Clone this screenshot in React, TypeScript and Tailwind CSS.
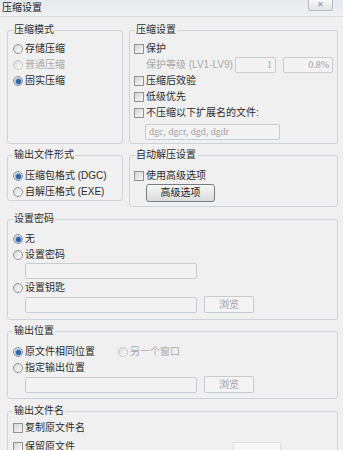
import React from 'react';

const font = { fontFamily: '"Liberation Sans", "Noto Sans CJK SC", sans-serif' };

function Radio({ label, checked = false, disabled = false }: { label: string; checked?: boolean; disabled?: boolean }) {
  return (
    <div className="flex items-center h-[16px] gap-[2px]">
      <span
        className={`w-[10px] h-[10px] rounded-full border flex items-center justify-center bg-gradient-to-br from-[#d8d8d8] to-[#ffffff] ${
          disabled ? 'border-[#c6c8ca]' : 'border-[#8e9195]'
        }`}
      >
        {checked && <span className="w-[5px] h-[5px] rounded-full bg-[#2f63a3] shadow-[0_0_1px_1px_#8fb3dc]" />}
      </span>
      <span className={disabled ? 'text-[#a9a9a9]' : 'text-[#2b2b2b]'}>{label}</span>
    </div>
  );
}

function Check({ label }: { label: string }) {
  return (
    <div className="flex items-center h-[16px] gap-[2px]">
      <span className="w-[10px] h-[10px] border border-[#8e9195] bg-gradient-to-br from-[#d6d6d6] to-[#f7f7f7]" />
      <span className="text-[#2b2b2b]">{label}</span>
    </div>
  );
}

function TextBox({ className = '', value = '', right = false }: { className?: string; value?: string; right?: boolean }) {
  return (
    <div
      className={`h-[16px] border border-[#c9cdd1] rounded-[2px] bg-[#f3f3f3] text-[#a0a0a0] flex items-center px-[3px] ${
        right ? 'justify-end' : ''
      } ${className}`}
      style={{ fontFamily: '"Liberation Serif", "Noto Sans CJK SC", serif' }}
    >
      {value}
    </div>
  );
}

function BrowseButton() {
  return (
    <div className="w-[50px] h-[17px] border border-[#c8cacc] rounded-[2px] bg-[#f4f4f4] text-[#a3a3a3] flex items-center justify-center">
      浏览
    </div>
  );
}

function Group({ title, className = '', children, contentClass = '' }: { title: string; className?: string; children: React.ReactNode; contentClass?: string }) {
  return (
    <fieldset className={`border border-[#cdd3d8] rounded-[3px] m-0 p-0 ${className}`}>
      <legend className="ml-[5px] px-[1px] leading-[12px] text-[#2b2b2b]">{title}</legend>
      <div className={`flex flex-col ${contentClass}`}>{children}</div>
    </fieldset>
  );
}

export default function App() {
  return (
    <div className="w-[343px] h-[450px] overflow-hidden bg-[#f0f0f0] text-[10px] leading-[12px]" style={font}>
      <div className="h-[17px] flex items-start justify-between bg-gradient-to-b from-[#e6e9ed] to-[#eef0f2] border-b border-[#d8dce0]">
        <span className="pl-[2px] pt-[2px] text-[#222]">压缩设置</span>
        <div className="mr-[10px] w-[25px] h-[11px] rounded-b-[3px] border border-t-0 border-[#b3b9c0] bg-gradient-to-b from-[#f7f8f9] to-[#e2e5e9] flex items-center justify-center text-[8px] text-[#8a9096] leading-none">
          ✕
        </div>
      </div>

      <div className="pl-[7px] pr-[5px] pt-[7px] flex flex-col">
        <div className="flex gap-[6px]">
          <Group title="压缩模式" className="w-[116px] h-[120px]" contentClass="mt-[5px] pl-[5px]">
            <Radio label="存储压缩" />
            <Radio label="普通压缩" disabled />
            <Radio label="固实压缩" checked />
          </Group>
          <Group title="压缩设置" className="w-[209px] h-[120px]" contentClass="mt-[5px] pl-[4px]">
            <Check label="保护" />
            <div className="flex items-center h-[16px]">
              <span className="ml-[12px] text-[#a9a9a9]">保护等级 (LV1-LV9)</span>
              <TextBox className="ml-auto w-[41px]" value="1" right />
              <TextBox className="ml-[7px] mr-[4px] w-[50px]" value="0.8%" right />
            </div>
            <Check label="压缩后效验" />
            <Check label="低级优先" />
            <Check label="不压缩以下扩展名的文件:" />
            <TextBox className="mt-[3px] ml-[11px] w-[135px] h-[15px]" value="dgc, dgcr, dgd, dgdr" />
          </Group>
        </div>

        <div className="flex gap-[6px] items-start mt-[5px]">
          <Group title="输出文件形式" className="w-[116px] h-[52px]" contentClass="mt-[7px] pl-[5px]">
            <Radio label="压缩包格式 (DGC)" checked />
            <Radio label="自解压格式 (EXE)" />
          </Group>
          <Group title="自动解压设置" className="w-[209px] h-[58px]" contentClass="mt-[7px] pl-[4px]">
            <Check label="使用高级选项" />
            <div className="ml-[12px] w-[69px] h-[18px] border border-[#767b80] rounded-[3px] bg-gradient-to-b from-[#f6f6f6] to-[#dcdcdc] flex items-center justify-center text-[#222]">
              高级选项
            </div>
          </Group>
        </div>

        <Group title="设置密码" className="mt-[6px] w-[331px] h-[107px]" contentClass="mt-[6px] pl-[5px]">
          <Radio label="无" checked />
          <Radio label="设置密码" />
          <TextBox className="ml-[12px] w-[172px]" />
          <div className="mt-[1px]">
            <Radio label="设置钥匙" />
          </div>
          <div className="flex items-center gap-[7px] ml-[12px]">
            <TextBox className="w-[172px]" />
            <BrowseButton />
          </div>
        </Group>

        <Group title="输出位置" className="mt-[5px] w-[331px] h-[74px]" contentClass="mt-[7px] pl-[5px]">
          <div className="flex">
            <div className="w-[105px]">
              <Radio label="原文件相同位置" checked />
            </div>
            <Radio label="另一个窗口" disabled />
          </div>
          <Radio label="指定输出位置" />
          <div className="flex items-center gap-[7px] ml-[12px]">
            <TextBox className="w-[172px]" />
            <BrowseButton />
          </div>
        </Group>

        <Group title="输出文件名" className="mt-[6px] w-[331px] h-[60px]" contentClass="mt-[3px] pl-[5px] gap-[2px]">
          <Check label="复制原文件名" />
          <div className="flex items-center">
            <Check label="保留原文件" />
            <div className="ml-[158px] mt-[4px] w-[48px] h-[14px] border border-[#dedede] bg-[#f7f7f7]" />
          </div>
        </Group>
      </div>
    </div>
  );
}
